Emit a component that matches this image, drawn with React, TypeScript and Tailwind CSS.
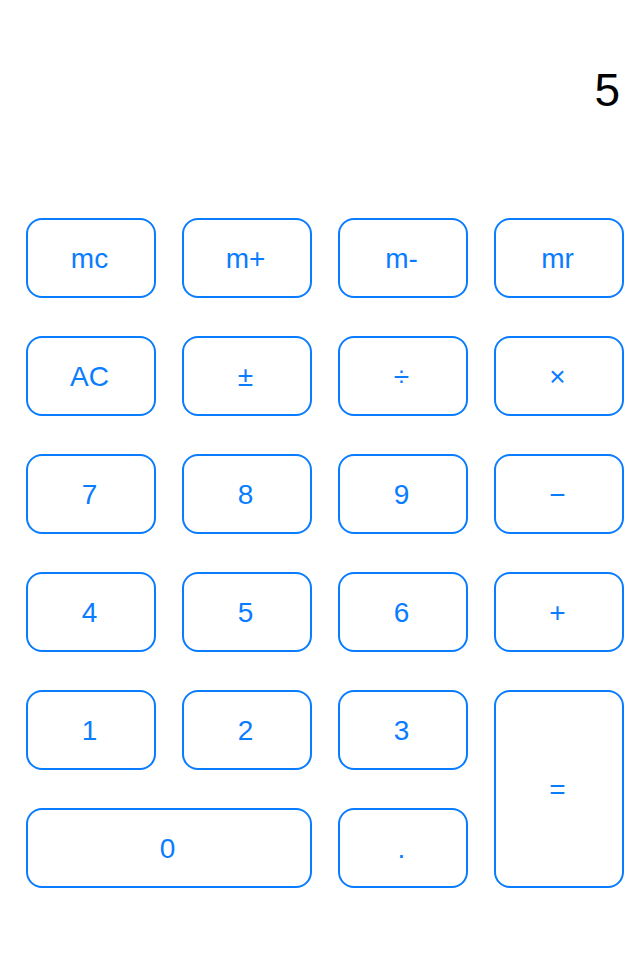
const keys: { label: string; span?: string }[] = [
  { label: 'mc' },
  { label: 'm+' },
  { label: 'm-' },
  { label: 'mr' },
  { label: 'AC' },
  { label: '±' },
  { label: '÷' },
  { label: '×' },
  { label: '7' },
  { label: '8' },
  { label: '9' },
  { label: '−' },
  { label: '4' },
  { label: '5' },
  { label: '6' },
  { label: '+' },
  { label: '1' },
  { label: '2' },
  { label: '3' },
  { label: '=', span: 'row-span-2' },
  { label: '0', span: 'col-span-2' },
  { label: '.' },
];

function App() {
  return (
    <div className="w-[640px] h-[960px] bg-white font-['Liberation_Sans',Arial,sans-serif]">
      <div className="h-[218px] pt-[62px] pr-[20px] text-right text-[46px] leading-[56px] text-black">
        5
      </div>
      <div className="grid grid-cols-[repeat(4,130px)] auto-rows-[80px] gap-x-[26px] gap-y-[38px] pl-[26px]">
        {keys.map((k) => (
          <button
            key={k.label}
            className={`${k.span ?? ''} flex items-center justify-center rounded-[16px] border-2 border-[#0a7cff] bg-white pr-[3px] pt-[2px] text-[28px] text-[#0a7cff]`}
          >
            {k.label}
          </button>
        ))}
      </div>
    </div>
  );
}

export default App;
